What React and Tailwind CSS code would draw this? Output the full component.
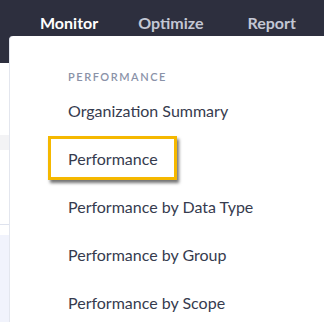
const items = [
  "Organization Summary",
  "Performance",
  "Performance by Data Type",
  "Performance by Group",
  "Performance by Scope",
];

export default function App() {
  return (
    <div className="relative h-[322px] w-[324px] overflow-hidden bg-white font-['Lato',sans-serif]">
      <div className="flex h-[63px] items-start bg-[#2d2f3e] pl-[40px] pt-[11px] text-[16px] font-bold">
        <span className="text-white">Monitor</span>
        <span className="ml-[40px] text-[#c3c7d4]">Optimize</span>
        <span className="ml-[44px] text-[#c3c7d4]">Report</span>
      </div>
      <div className="mt-[72px] h-[15px] bg-[#f3f3f5]" />
      <div className="mt-[74px] h-[11px] border-t border-[#dfe3ee]" />
      <div className="h-full bg-[#f1f3fc]" />

      <div className="absolute bottom-0 left-[9px] right-0 top-[36px] rounded-tl-[4px] border-l border-[#e3e6ee] bg-white pl-[58px] pt-[33px]">
        <div className="text-[11px] font-semibold tracking-[0.14em] text-[#8a92a8]">
          PERFORMANCE
        </div>
        <ul className="mt-[1px] text-[16px] text-[#363b4e]">
          {items.map((item) => (
            <li key={item} className="relative flex h-[48px] items-center">
              {item === "Performance" && (
                <span className="absolute left-[-20px] top-[1px] h-[44px] w-[129px] border-[3px] border-[#f5b800] shadow-[2px_3px_3px_rgba(0,0,0,0.55)]" />
              )}
              <span className="relative">{item}</span>
            </li>
          ))}
        </ul>
      </div>
    </div>
  );
}
